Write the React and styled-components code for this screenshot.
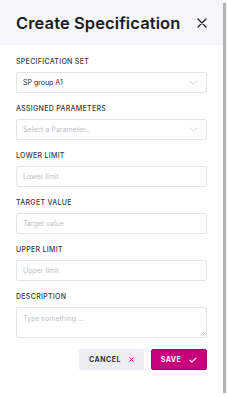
import React from "react";
import styled, { createGlobalStyle } from "styled-components";

const GlobalStyle = createGlobalStyle`
  html, body {
    margin: 0;
    padding: 0;
    background: #ffffff;
  }
  body {
    font-family: Inter, "Noto Sans", sans-serif;
  }
  * { box-sizing: border-box; }
`;

const Panel = styled.div`
  width: 223px;
  height: 393px;
  background: #ffffff;
  box-shadow: 3px 3px 1px rgba(0, 0, 0, 0.3);
  display: flex;
  flex-direction: column;
`;

const Header = styled.div`
  height: 45px;
  background: #f5f6fa;
  display: flex;
  align-items: center;
  justify-content: space-between;
  padding: 0 16px 0 16px;
`;

const Title = styled.h1`
  margin: 0;
  font-size: 16.5px;
  font-weight: 600;
  color: #1c1c24;
  letter-spacing: 0.1px;
`;

const CloseButton = styled.button`
  border: 0;
  background: transparent;
  padding: 0;
  width: 10px;
  height: 10px;
  display: flex;
  cursor: pointer;
`;

const Body = styled.div`
  padding: 12px 16px 0 16px;
  display: flex;
  flex-direction: column;
`;

const Field = styled.div`
  display: flex;
  flex-direction: column;
  gap: 6px;
  margin-bottom: 11px;
`;

const Label = styled.label`
  font-size: 7px;
  line-height: 9px;
  font-weight: 500;
  letter-spacing: 0.3px;
  color: #3a3a44;
  text-transform: uppercase;
`;

const Box = styled.div`
  height: ${p => (p.tall ? 31 : 21)}px;
  border: 1px solid #e3e5ea;
  border-radius: 2px;
  display: flex;
  align-items: ${p => (p.tall ? "flex-start" : "center")};
  justify-content: space-between;
  padding: ${p => (p.tall ? "6px 6px 0 6px" : "0 8px 0 6px")};
  font-size: 7px;
  color: ${p => (p.placeholder ? "#bcbfc7" : "#2a2a33")};
  position: relative;
`;

const Grip = styled.svg`
  position: absolute;
  right: 1px;
  bottom: 1px;
`;

const Actions = styled.div`
  display: flex;
  justify-content: flex-end;
  gap: 7px;
`;

const Button = styled.button`
  height: 21px;
  width: ${p => p.w}px;
  border-radius: 2px;
  border: 1px solid ${p => (p.primary ? "#a8006a" : "#eceef3")};
  background: ${p => (p.primary ? "#c8007e" : "#eceef3")};
  color: ${p => (p.primary ? "#ffffff" : "#34343c")};
  font-family: Inter, "Noto Sans", sans-serif;
  font-size: 7px;
  font-weight: 700;
  letter-spacing: 0.5px;
  display: flex;
  align-items: center;
  justify-content: center;
  gap: 8px;
  padding: 0;
`;

const Chevron = () => (
  <svg width="9" height="5" viewBox="0 0 9 5">
    <path d="M0.5 0.5 L4.5 4.3 L8.5 0.5" fill="none" stroke="#c5c8cf" strokeWidth="0.8" />
  </svg>
);

const Select = ({ value, placeholder }) => (
  <Box placeholder={!value}>
    <span>{value || placeholder}</span>
    <Chevron />
  </Box>
);

const fields = [
  { label: "Lower limit", placeholder: "Lower limit" },
  { label: "Target value", placeholder: "Target value" },
  { label: "Upper limit", placeholder: "Upper limit" },
];

export default function App() {
  return (
    <>
      <GlobalStyle />
      <Panel>
        <Header>
          <Title>Create Specification</Title>
          <CloseButton aria-label="Close">
            <svg width="10" height="10" viewBox="0 0 10 10">
              <path d="M1 1 L9 9 M9 1 L1 9" stroke="#1c1c24" strokeWidth="1.2" strokeLinecap="round" />
            </svg>
          </CloseButton>
        </Header>
        <Body>
          <Field>
            <Label>Specification set</Label>
            <Select value="SP group A1" />
          </Field>
          <Field>
            <Label>Assigned parameters</Label>
            <Select placeholder="Select a Parameter.." />
          </Field>
          {fields.map(f => (
            <Field key={f.label}>
              <Label>{f.label}</Label>
              <Box placeholder>{f.placeholder}</Box>
            </Field>
          ))}
          <Field>
            <Label>Description</Label>
            <Box placeholder tall>
              Type something ...
              <Grip width="5" height="5" viewBox="0 0 5 5">
                <path d="M4.5 0.5 L0.5 4.5 M4.5 2.5 L2.5 4.5" stroke="#9a9da5" strokeWidth="0.6" />
              </Grip>
            </Box>
          </Field>
          <Actions>
            <Button w={65}>
              CANCEL
              <svg width="5" height="5" viewBox="0 0 5 5">
                <path d="M0.5 0.5 L4.5 4.5 M4.5 0.5 L0.5 4.5" stroke="#d0157f" strokeWidth="1" />
              </svg>
            </Button>
            <Button primary w={56}>
              SAVE
              <svg width="8" height="6" viewBox="0 0 8 6">
                <path d="M0.7 3 L2.9 5 L7.3 0.8" fill="none" stroke="#ffffff" strokeWidth="1.1" />
              </svg>
            </Button>
          </Actions>
        </Body>
      </Panel>
    </>
  );
}
